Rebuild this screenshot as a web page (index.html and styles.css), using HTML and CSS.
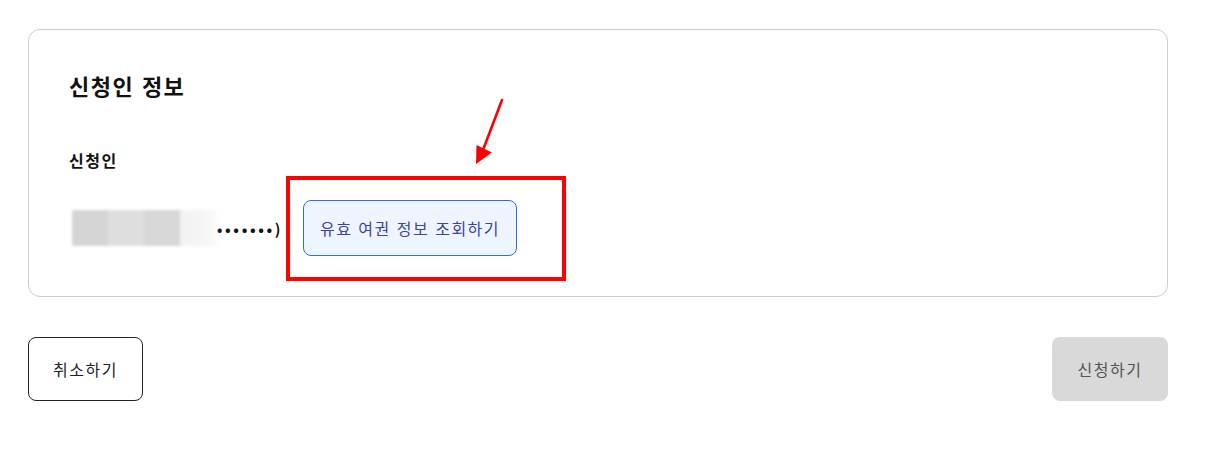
FILE: index.html
```html
<!DOCTYPE html>
<html lang="ko">
<head>
    <meta charset="UTF-8">
    <meta name="viewport" content="width=device-width, initial-scale=1.0">
    <title>신청인 정보</title>
    <link rel="stylesheet" href="styles.css">
</head>
<body>
    <div class="page">
        <section class="card">
            <h2 class="card-title">신청인 정보</h2>
            <p class="field-label">신청인</p>
            <div class="applicant-row">
                <div class="masked-name">
                    <span class="blur-block"></span>
                    <span class="dots">•••••••)</span>
                </div>
                <div class="annot">
                    <button class="btn-lookup">유효 여권 정보 조회하기</button>
                    <span class="highlight"></span>
                    <svg class="arrow" width="40" height="72" viewBox="470 96 40 72">
                        <line x1="502" y1="100" x2="483" y2="150" stroke="#ff0000" stroke-width="2.6" stroke-linecap="round"/>
                        <polygon points="476,164 476.5,145 492,152.5" fill="#ff0000"/>
                    </svg>
                </div>
            </div>
        </section>

        <div class="actions">
            <button class="btn btn-cancel">취소하기</button>
            <button class="btn btn-submit" disabled>신청하기</button>
        </div>
    </div>
</body>
</html>
```

FILE: styles.css
```css
* {
    box-sizing: border-box;
    margin: 0;
    padding: 0;
}

body {
    font-family: "Noto Sans CJK KR", "Noto Sans", sans-serif;
    background: #fff;
    color: #111;
}

.page {
    width: 1140px;
    margin-left: 28px;
    padding-top: 29px;
}

.card {
    border: 1px solid #cccccc;
    border-radius: 12px;
    padding: 40px 40px 40px 40px;
}

.card-title {
    font-size: 22px;
    font-weight: 700;
    line-height: 31px;
    letter-spacing: 1.5px;
    color: #111;
}

.field-label {
    margin-top: 47px;
    font-size: 16px;
    font-weight: 700;
    line-height: 24px;
    letter-spacing: 1.5px;
}

.applicant-row {
    margin-top: 28px;
    display: flex;
    align-items: center;
}

.masked-name {
    display: flex;
    align-items: center;
    margin-left: 3px;
    width: 211px;
}

.blur-block {
    width: 148px;
    height: 36px;
    background: linear-gradient(90deg, #d5d5d5 0, #d5d5d5 36px, #dedede 36px, #dedede 72px, #d7d7d7 72px, #d7d7d7 108px, #f2f2f2 108px, #f6f6f6 135px, rgba(255,255,255,0) 148px);
    filter: blur(1.5px);
}

.dots {
    font-size: 15px;
    font-weight: 700;
    letter-spacing: 2.6px;
    color: #111;
    margin-left: -2px;
}

.annot {
    position: relative;
    margin-left: 20px;
}

.btn-lookup {
    display: block;
    width: 214px;
    height: 56px;
    border: 1px solid #2f6fe0;
    border-radius: 8px;
    background: #eef5ff;
    color: #3b45a0;
    font-family: inherit;
    font-size: 16px;
    letter-spacing: 1.5px;
    cursor: pointer;
}

.highlight {
    position: absolute;
    top: -24px;
    left: -17px;
    right: -49px;
    bottom: -25px;
    border: 4px solid #ff0000;
    pointer-events: none;
}

.arrow {
    position: absolute;
    left: 167px;
    top: -104px;
}

.actions {
    margin-top: 40px;
    display: flex;
    justify-content: space-between;
}

.btn {
    height: 64px;
    width: 116px;
    border-radius: 8px;
    font-family: inherit;
    font-size: 16px;
    letter-spacing: 1.5px;
}

.btn-cancel {
    width: 115px;
    background: #fff;
    border: 1px solid #222;
    color: #222;
    cursor: pointer;
}

.btn-submit {
    background: #d9d9d9;
    border: none;
    color: #555;
}
```
